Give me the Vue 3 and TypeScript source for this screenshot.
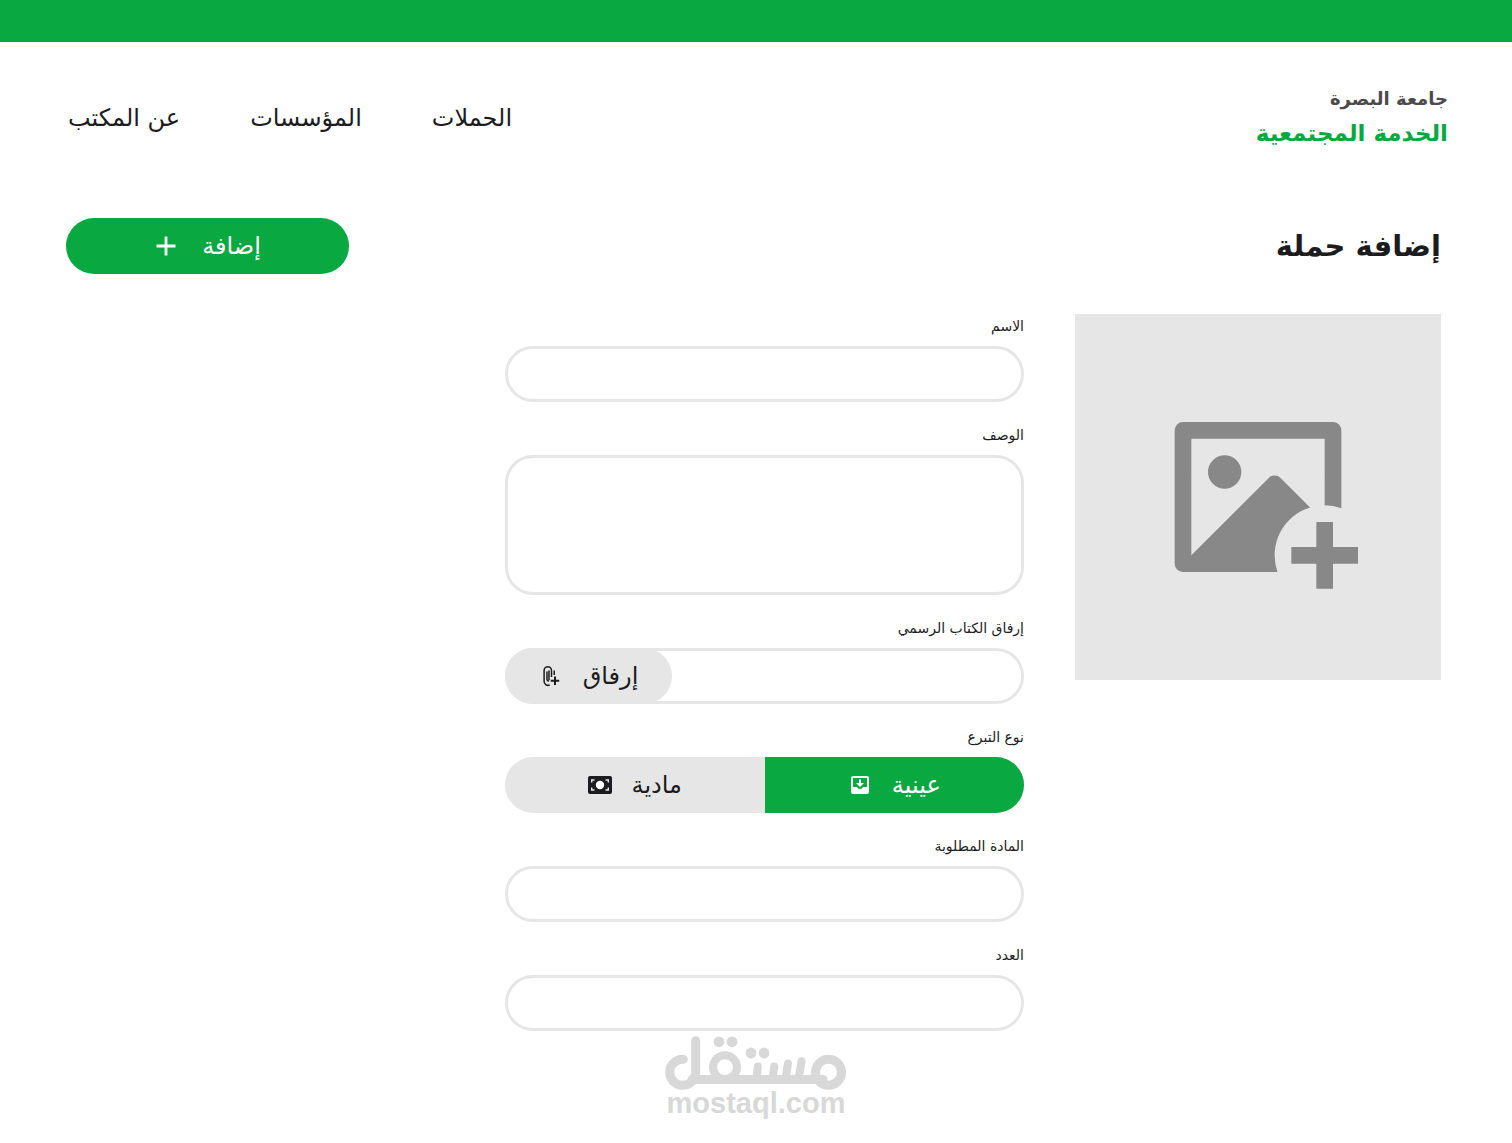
<script setup lang="ts">
import { ref } from 'vue'

type DonationKind = 'goods' | 'money'

interface NavLink {
  label: string
  href: string
}

const links: NavLink[] = [
  { label: 'الحملات', href: '#campaigns' },
  { label: 'المؤسسات', href: '#institutions' },
  { label: 'عن المكتب', href: '#about' },
]

const name = ref('')
const description = ref('')
const material = ref('')
const count = ref('')
const kind = ref<DonationKind>('goods')
</script>

<template>
  <div class="page" dir="rtl" lang="ar">
    <div class="topbar"></div>

    <header class="header">
      <div class="brand">
        <span class="brand-university">جامعة البصرة</span>
        <span class="brand-office">الخدمة المجتمعية</span>
      </div>
      <nav class="nav">
        <a v-for="link in links" :key="link.href" :href="link.href">{{ link.label }}</a>
      </nav>
    </header>

    <form class="campaign" @submit.prevent>
      <div class="heading">
        <h1>إضافة حملة</h1>
        <button class="add" type="submit">
          <span>إضافة</span>
          <svg class="icon" viewBox="0 0 24 24" aria-hidden="true">
            <path d="M12 2.5v19M2.5 12h19" fill="none" stroke="currentColor" stroke-width="2.8" />
          </svg>
        </button>
      </div>

      <div class="content">
        <label class="picture">
          <input class="hidden-input" type="file" accept="image/*" aria-label="صورة الحملة" />
          <svg viewBox="0 0 24 24" fill="currentColor" aria-hidden="true">
            <path
              d="M21 15V18H24V20H21V23H19V20H16V18H19V15ZM21.008 3C21.556 3 22 3.445 22 3.993V13.342A6 6 0 0 0 20 13V5H4V19L13.293 9.707A1 1 0 0 1 14.707 9.706L18.252 13.251A6 6 0 0 0 14.342 21H2.992A.993.993 0 0 1 2 20.007V3.993A.993.993 0 0 1 2.992 3ZM8 7A2 2 0 1 1 8 11A2 2 0 0 1 8 7Z"
            />
          </svg>
        </label>

        <div class="fields">
          <div class="field">
            <label class="caption" for="name">الاسم</label>
            <input id="name" v-model="name" class="box" type="text" />
          </div>

          <div class="field">
            <label class="caption" for="description">الوصف</label>
            <textarea id="description" v-model="description" class="box area"></textarea>
          </div>

          <div class="field">
            <label class="caption" for="letter">إرفاق الكتاب الرسمي</label>
            <div class="box attach">
              <input id="letter" class="hidden-input" type="file" />
              <label class="attach-button" for="letter">
                <span>إرفاق</span>
                <svg class="icon" viewBox="0 0 24 24" fill="none" stroke="currentColor" aria-hidden="true">
                  <path
                    d="M12.500 13V6.500a3.700 3.700 0 0 0-7.400 0V17a4 4 0 0 0 5.600 4M10 6.500V16.300M8 7.500V15.500a1.600 1.600 0 0 0 2 1.500M15.200 6.500v4.500"
                    stroke-width="1.500"
                  />
                  <path d="M16 12.500v8.500M11.800 16.800h8.400" stroke-width="2" />
                </svg>
              </label>
            </div>
          </div>

          <div class="field" role="radiogroup" aria-labelledby="kind-caption">
            <span id="kind-caption" class="caption">نوع التبرع</span>
            <div class="switch">
              <label class="option" :class="{ active: kind === 'goods' }">
                <input v-model="kind" class="hidden-input" type="radio" name="kind" value="goods" />
                <span>عينية</span>
                <svg class="icon" viewBox="0 0 24 24" fill="currentColor" aria-hidden="true">
                  <path
                    d="M19 3H5a2 2 0 0 0-2 2v14a2 2 0 0 0 2 2h14a2 2 0 0 0 2-2V5a2 2 0 0 0-2-2ZM19 14h-4a3.200 3.200 0 0 1-6 0H5V5H19ZM16 10h-3V6.500h-2V10H8l4 4Z"
                  />
                </svg>
              </label>
              <label class="option" :class="{ active: kind === 'money' }">
                <input v-model="kind" class="hidden-input" type="radio" name="kind" value="money" />
                <span>مادية</span>
                <svg class="icon" viewBox="0 0 24 24" aria-hidden="true">
                  <rect y="3" width="24" height="18" rx="2" fill="currentColor" />
                  <circle cx="12" cy="12" r="4.200" fill="#fff" />
                  <path
                    d="M3.700 9.500V7H6.500M17.500 7h2.800v2.500M20.300 14.500V17h-2.800M6.500 17H3.700v-2.500"
                    fill="none"
                    stroke="#e6e6e6"
                    stroke-width="1.400"
                  />
                </svg>
              </label>
            </div>
          </div>

          <div class="field">
            <label class="caption" for="material">المادة المطلوبة</label>
            <input id="material" v-model="material" class="box" type="text" />
          </div>

          <div class="field">
            <label class="caption" for="count">العدد</label>
            <input id="count" v-model="count" class="box" type="text" inputmode="numeric" />
          </div>
        </div>
      </div>
    </form>

    <footer class="mark" dir="ltr">
      <svg viewBox="0 0 182 54" role="img" aria-label="مستقل">
        <g fill="none" stroke="currentColor" stroke-width="9" stroke-linecap="round" stroke-linejoin="round">
          <path d="M18.300 23.300A13 13 0 1 0 30.700 36V4.800M27 43.400H158" />
          <circle cx="60" cy="31.200" r="12" stroke-width="8" />
          <path
            d="M92.800 30.500L91.500 43M109.300 30.500L107.500 43M123 27.500L120.500 43M136.500 25.300L133.500 43"
            stroke-width="8"
          />
          <circle cx="163.500" cy="36.300" r="13" />
        </g>
        <g fill="currentColor">
          <circle cx="54" cy="5.800" r="5.400" />
          <circle cx="67" cy="5.800" r="5.400" />
          <circle cx="86" cy="17" r="5.400" />
          <circle cx="99" cy="17" r="5.400" />
        </g>
      </svg>
      <span>mostaql.com</span>
    </footer>
  </div>
</template>

<style>
body {
  margin: 0;
  background: #fff;
}
</style>

<style scoped>
.page {
  --green: #09a840;
  --grey: #e6e6e6;
  --ink: #1c1c1e;
  color: var(--ink);
  font-family: 'DejaVu Sans', sans-serif;
  font-size: 24px;
  line-height: 32px;
}

.page *,
.page *::before {
  box-sizing: border-box;
}

.topbar {
  height: 42px;
  background: var(--green);
}

.header {
  display: flex;
  justify-content: space-between;
  align-items: center;
  height: 152px;
  padding: 0 64px 0 68px;
}

.brand {
  display: flex;
  flex-direction: column;
  gap: 2px;
  padding-bottom: 4px;
  font-weight: 700;
}

.brand-university {
  color: #4b4b4d;
  font-size: 18px;
}

.brand-office {
  color: var(--green);
  font-size: 23px;
}

.nav {
  display: flex;
  gap: 70px;
}

.nav a {
  color: inherit;
  text-decoration: none;
}

.campaign {
  padding: 24px 71px 0 66px;
}

.heading {
  display: flex;
  justify-content: space-between;
  align-items: center;
  margin-bottom: 40px;
}

h1 {
  margin: 0;
  font-size: 29px;
  line-height: 48px;
}

.add {
  display: flex;
  justify-content: center;
  align-items: center;
  gap: 24px;
  width: 283px;
  height: 56px;
  padding: 0;
  border: 0;
  border-radius: 28px;
  background: var(--green);
  color: #fff;
  font: inherit;
  cursor: pointer;
}

.icon {
  flex: none;
  width: 24px;
  height: 24px;
}

.content {
  display: flex;
  align-items: flex-start;
  gap: 51px;
}

.picture {
  position: relative;
  display: flex;
  flex: 0 1 366px;
  justify-content: center;
  align-items: center;
  aspect-ratio: 1;
  background: var(--grey);
  color: #888;
  cursor: pointer;
}

.picture svg {
  width: 200px;
  height: 200px;
}

.hidden-input {
  position: absolute;
  width: 1px;
  height: 1px;
  margin: 0;
  opacity: 0;
}

.fields {
  display: flex;
  flex: 0 1 519px;
  flex-direction: column;
  gap: 21px;
}

.field {
  display: flex;
  flex-direction: column;
  gap: 8px;
}

.caption {
  font-size: 14px;
  line-height: 24px;
}

.box {
  width: 100%;
  height: 56px;
  padding: 0 24px;
  border: 3px solid var(--grey);
  border-radius: 28px;
  background: #fff;
  color: inherit;
  font: inherit;
}

.area {
  display: block;
  height: 140px;
  padding: 12px 24px;
  resize: none;
}

.attach {
  position: relative;
  display: flex;
  justify-content: flex-end;
  padding: 0;
}

.attach-button {
  display: flex;
  justify-content: center;
  align-items: center;
  gap: 20px;
  width: 167px;
  margin: -3px 0 -3px -3px;
  border-radius: 28px;
  background: var(--grey);
  cursor: pointer;
}

.switch {
  display: flex;
  height: 56px;
  overflow: hidden;
  border-radius: 28px;
  background: var(--grey);
}

.option {
  position: relative;
  display: flex;
  flex: 1;
  justify-content: center;
  align-items: center;
  gap: 20px;
  cursor: pointer;
}

.option.active {
  background: var(--green);
  color: #fff;
}

.mark {
  display: flex;
  flex-direction: column;
  align-items: center;
  padding: 5px 0 24px;
  color: #d8d8d8;
  font-family: 'Liberation Sans', Arial, sans-serif;
  font-size: 29px;
  font-weight: 700;
  line-height: 26px;
}

.mark svg {
  width: 182px;
  height: 54px;
}
</style>
